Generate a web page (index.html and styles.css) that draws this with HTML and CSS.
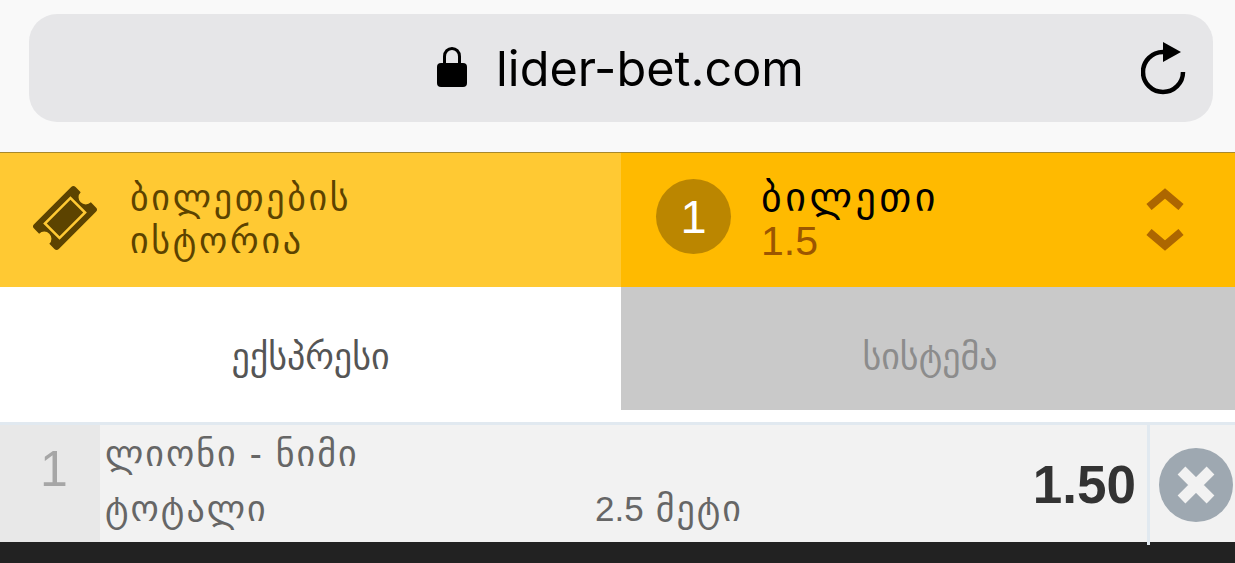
FILE: index.html
```html
<!DOCTYPE html>
<html lang="ka">
<head>
<meta charset="utf-8">
<title>lider-bet.com</title>
<link rel="stylesheet" href="styles.css">
</head>
<body>
<header class="browser">
  <div class="address">
    <div class="url">
      <svg class="lock" viewBox="0 0 30 40" width="30" height="40"><path d="M7.500 18V9.500C7.500 4.500 11 1.500 15 1.500s7.500 3 7.500 8V18" fill="none" stroke="#000" stroke-width="3"/><rect x="0" y="16" width="30" height="24" rx="4" fill="#000"/></svg>
      <span>lider-bet.com</span>
    </div>
    <svg class="reload" viewBox="0 0 46 54" width="46" height="54"><path d="M22 11A20 20 0 1 0 42 31" fill="none" stroke="#000" stroke-width="4.500"/><path d="M22 1l18 10-18 10z" fill="#000"/></svg>
  </div>
</header>
<section class="head">
  <div class="history">
    <svg class="ticket" viewBox="0 0 66 66" width="68" height="68"><g transform="rotate(-45 33 33)"><path fill="#5c4300" d="M7.500 16H58.500a3 3 0 0 1 3 3v7a7 7 0 0 0 0 14v7a3 3 0 0 1-3 3H7.500a3 3 0 0 1-3-3v-7a7 7 0 0 0 0-14v-7a3 3 0 0 1 3-3z"/><rect x="15.500" y="23" width="35" height="20" fill="#5c4300" stroke="#ffc933" stroke-width="2.500"/></g></svg>
    <div class="history-label">ბილეთების<br>ისტორია</div>
  </div>
  <div class="slip">
    <div class="count">1</div>
    <div class="slip-text">
      <div class="slip-title">ბილეთი</div>
      <div class="slip-odds">1.5</div>
    </div>
    <div class="arrows">
      <svg viewBox="0 0 38 22" width="38" height="22"><path d="M3 19L19 5.500 35 19" fill="none" stroke="#ad6600" stroke-width="8"/></svg>
      <svg viewBox="0 0 38 22" width="38" height="22"><path d="M3 3l16 13.500L35 3" fill="none" stroke="#ad6600" stroke-width="8"/></svg>
    </div>
  </div>
</section>
<nav class="tabs">
  <div class="tab tab-active">ექსპრესი</div>
  <div class="tab tab-off">სისტემა</div>
</nav>
<section class="bet">
  <div class="bet-num">1</div>
  <div class="bet-info">
    <div class="bet-match">ლიონი - ნიმი</div>
    <div class="bet-market"><span class="market-name">ტოტალი</span><span><span class="digits">2.5</span> მეტი</span></div>
  </div>
  <div class="bet-price">1.50</div>
  <div class="bet-close">
    <svg viewBox="0 0 74 74" width="74" height="74"><circle cx="37" cy="37" r="37" fill="#9ea8b1"/><path d="M22.500 22.500l29 29M51.500 22.500l-29 29" stroke="#f2f2f2" stroke-width="11"/></svg>
  </div>
</section>
<footer class="bottom"></footer>
</body>
</html>
```
FILE: styles.css
```css
html, body { margin: 0; padding: 0; }
body {
  width: 1235px;
  height: 563px;
  overflow: hidden;
  background: #fff;
  font-family: "Liberation Sans", "DejaVu Sans", sans-serif;
}
.browser {
  height: 152px;
  box-sizing: border-box;
  padding: 14px 22px 30px 29px;
  background: #f9f9f9;
}
.address {
  height: 108px;
  border-radius: 28px;
  background: #e6e6e8;
  position: relative;
  display: flex;
  align-items: center;
  justify-content: center;
}
.url {
  display: flex;
  align-items: center;
  gap: 29px;
  font-family: Inter, sans-serif;
  font-size: 48.600px;
  color: #000;
  margin-left: -1px;
}
.lock { display: block; margin-top: -2px; }
.reload { position: absolute; right: 26px; top: 27px; }
.head {
  height: 135px;
  display: flex;
  border-top: 1px solid #a8882c;
  box-sizing: border-box;
}
.history {
  width: 621px;
  background: #ffc933;
  display: flex;
  align-items: center;
  padding-left: 31px;
  box-sizing: border-box;
  gap: 31px;
}
.ticket { margin-top: -4px; }
.history-label {
  font-size: 36px;
  letter-spacing: 2.700px;
  line-height: 43px;
  margin-top: -3px;
  color: #5c4300;
}
.slip {
  flex: 1;
  background: #ffba00;
  display: flex;
  align-items: center;
  padding: 0 51px 0 35px;
}
.count {
  width: 75px;
  height: 75px;
  margin-top: -8px;
  border-radius: 50%;
  background: #bb8600;
  color: #fff;
  font-size: 47px;
  line-height: 75px;
  text-align: center;
}
.slip-text { flex: 1; padding-left: 30px; margin-top: -1px; }
.slip-title { font-size: 40px; letter-spacing: 3.500px; line-height: 43px; color: #000; }
.slip-odds { font-size: 41px; line-height: 45px; color: #9c5600; }
.arrows { display: flex; flex-direction: column; gap: 19px; margin-top: -1px; }
.arrows svg { display: block; }
.tabs {
  height: 138px;
  display: flex;
  align-items: flex-start;
  box-sizing: border-box;
  border-bottom: 3px solid #e1e9f0;
}
.tab {
  height: 123px;
  line-height: 139px;
  text-align: center;
  font-size: 36px;
}
.tab-active { width: 621px; color: #555; background: #fff; }
.tab-off { flex: 1; color: #8c8c8c; background: #c9c9c9; padding-left: 4px; box-sizing: border-box; }
.bet {
  height: 117px;
  box-sizing: border-box;
  display: flex;
  background: #f2f2f2;
  position: relative;
  color: #666;
}
.bet-num {
  width: 100px;
  background: #e8e8e8;
  color: #a6a6a6;
  font-size: 50px;
  line-height: 88px;
  text-align: center;
  padding-left: 8px;
  box-sizing: border-box;
}
.bet-info { flex: 1; padding: 4px 0 0 5px; font-size: 36px; letter-spacing: 2px; }
.bet-match { line-height: 50px; }
.bet-market { display: flex; line-height: 60px; }
.market-name { width: 490px; }
.digits { font-size: 35px; letter-spacing: 0; }
.bet-price {
  width: 147px;
  box-sizing: border-box;
  padding-right: 11px;
  text-align: right;
  font-size: 53px;
  font-weight: 700;
  color: #333;
  line-height: 120px;
}
.bet-close {
  width: 88px;
  height: 120px;
  box-sizing: border-box;
  border-left: 3px solid #e1e9f0;
  padding: 23px 0 0 9px;
  position: relative;
  z-index: 1;
}
.bet-close svg { display: block; }
.bottom { height: 21px; background: #222; position: relative; }
```
